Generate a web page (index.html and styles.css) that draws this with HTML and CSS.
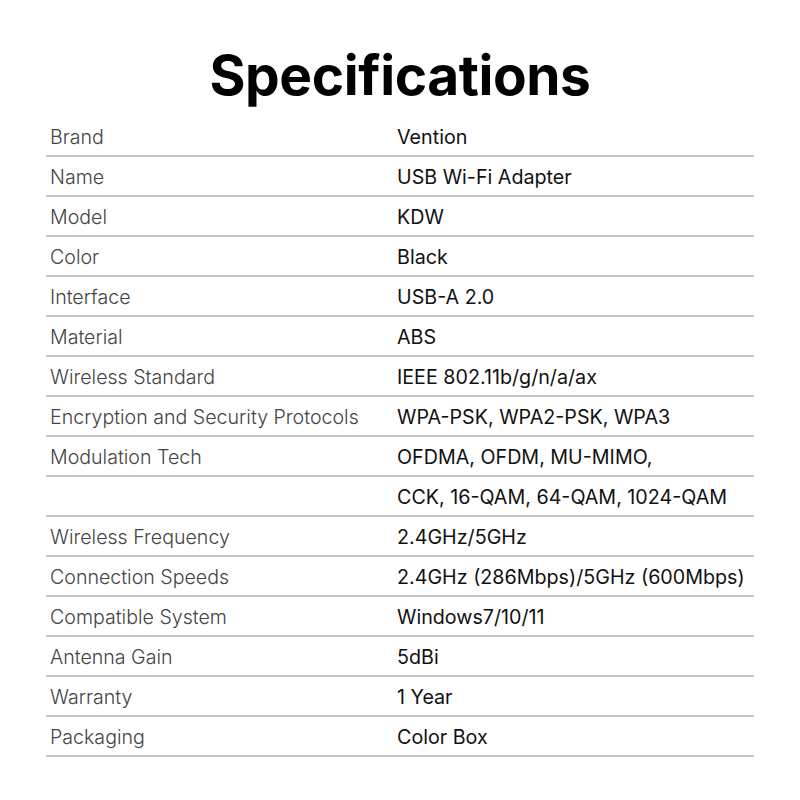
FILE: index.html
```html
<!DOCTYPE html>
<html>
<head>
<meta charset="utf-8">
<link rel="stylesheet" href="styles.css">
</head>
<body>
<div class="page">
  <h1 class="title">Specifications</h1>
  <div class="specs">
    <div class="row"><span class="label">Brand</span><span class="value">Vention</span></div>
    <div class="row"><span class="label">Name</span><span class="value">USB Wi-Fi Adapter</span></div>
    <div class="row"><span class="label">Model</span><span class="value">KDW</span></div>
    <div class="row"><span class="label">Color</span><span class="value">Black</span></div>
    <div class="row"><span class="label">Interface</span><span class="value">USB-A 2.0</span></div>
    <div class="row"><span class="label">Material</span><span class="value">ABS</span></div>
    <div class="row"><span class="label">Wireless Standard</span><span class="value">IEEE 802.11b/g/n/a/ax</span></div>
    <div class="row"><span class="label">Encryption and Security Protocols</span><span class="value">WPA-PSK, WPA2-PSK, WPA3</span></div>
    <div class="row"><span class="label">Modulation Tech</span><span class="value">OFDMA, OFDM, MU-MIMO,</span></div>
    <div class="row"><span class="label"></span><span class="value">CCK, 16-QAM, 64-QAM, 1024-QAM</span></div>
    <div class="row"><span class="label">Wireless Frequency</span><span class="value">2.4GHz/5GHz</span></div>
    <div class="row"><span class="label">Connection Speeds</span><span class="value">2.4GHz (286Mbps)/5GHz (600Mbps)</span></div>
    <div class="row"><span class="label">Compatible System</span><span class="value">Windows7/10/11</span></div>
    <div class="row"><span class="label">Antenna Gain</span><span class="value">5dBi</span></div>
    <div class="row"><span class="label">Warranty</span><span class="value">1 Year</span></div>
    <div class="row"><span class="label">Packaging</span><span class="value">Color Box</span></div>
  </div>
</div>
</body>
</html>
```

FILE: styles.css
```css
html, body {
  margin: 0;
  padding: 0;
  background: #ffffff;
}
.page {
  width: 800px;
  height: 800px;
  box-sizing: border-box;
  padding: 36px 46px 0 46px;
  font-family: Inter, "Noto Sans", sans-serif;
}
.title {
  margin: 0;
  height: 81px;
  text-align: center;
  font-size: 55px;
  font-weight: 700;
  line-height: 78px;
  color: #000;
  letter-spacing: -0.4px;
}
.specs {
  display: flex;
  flex-direction: column;
}
.row {
  display: grid;
  grid-template-columns: 351px 1fr;
  height: 40px;
  box-sizing: border-box;
  border-bottom: 2px solid #c4c4c4;
  align-items: center;
  padding-top: 1px;
}
.label {
  padding-left: 4px;
  font-size: 19.6px;
  font-weight: 300;
  color: #444;
}
.value {
  font-size: 19.7px;
  font-weight: 400;
  color: #111;
}
```
